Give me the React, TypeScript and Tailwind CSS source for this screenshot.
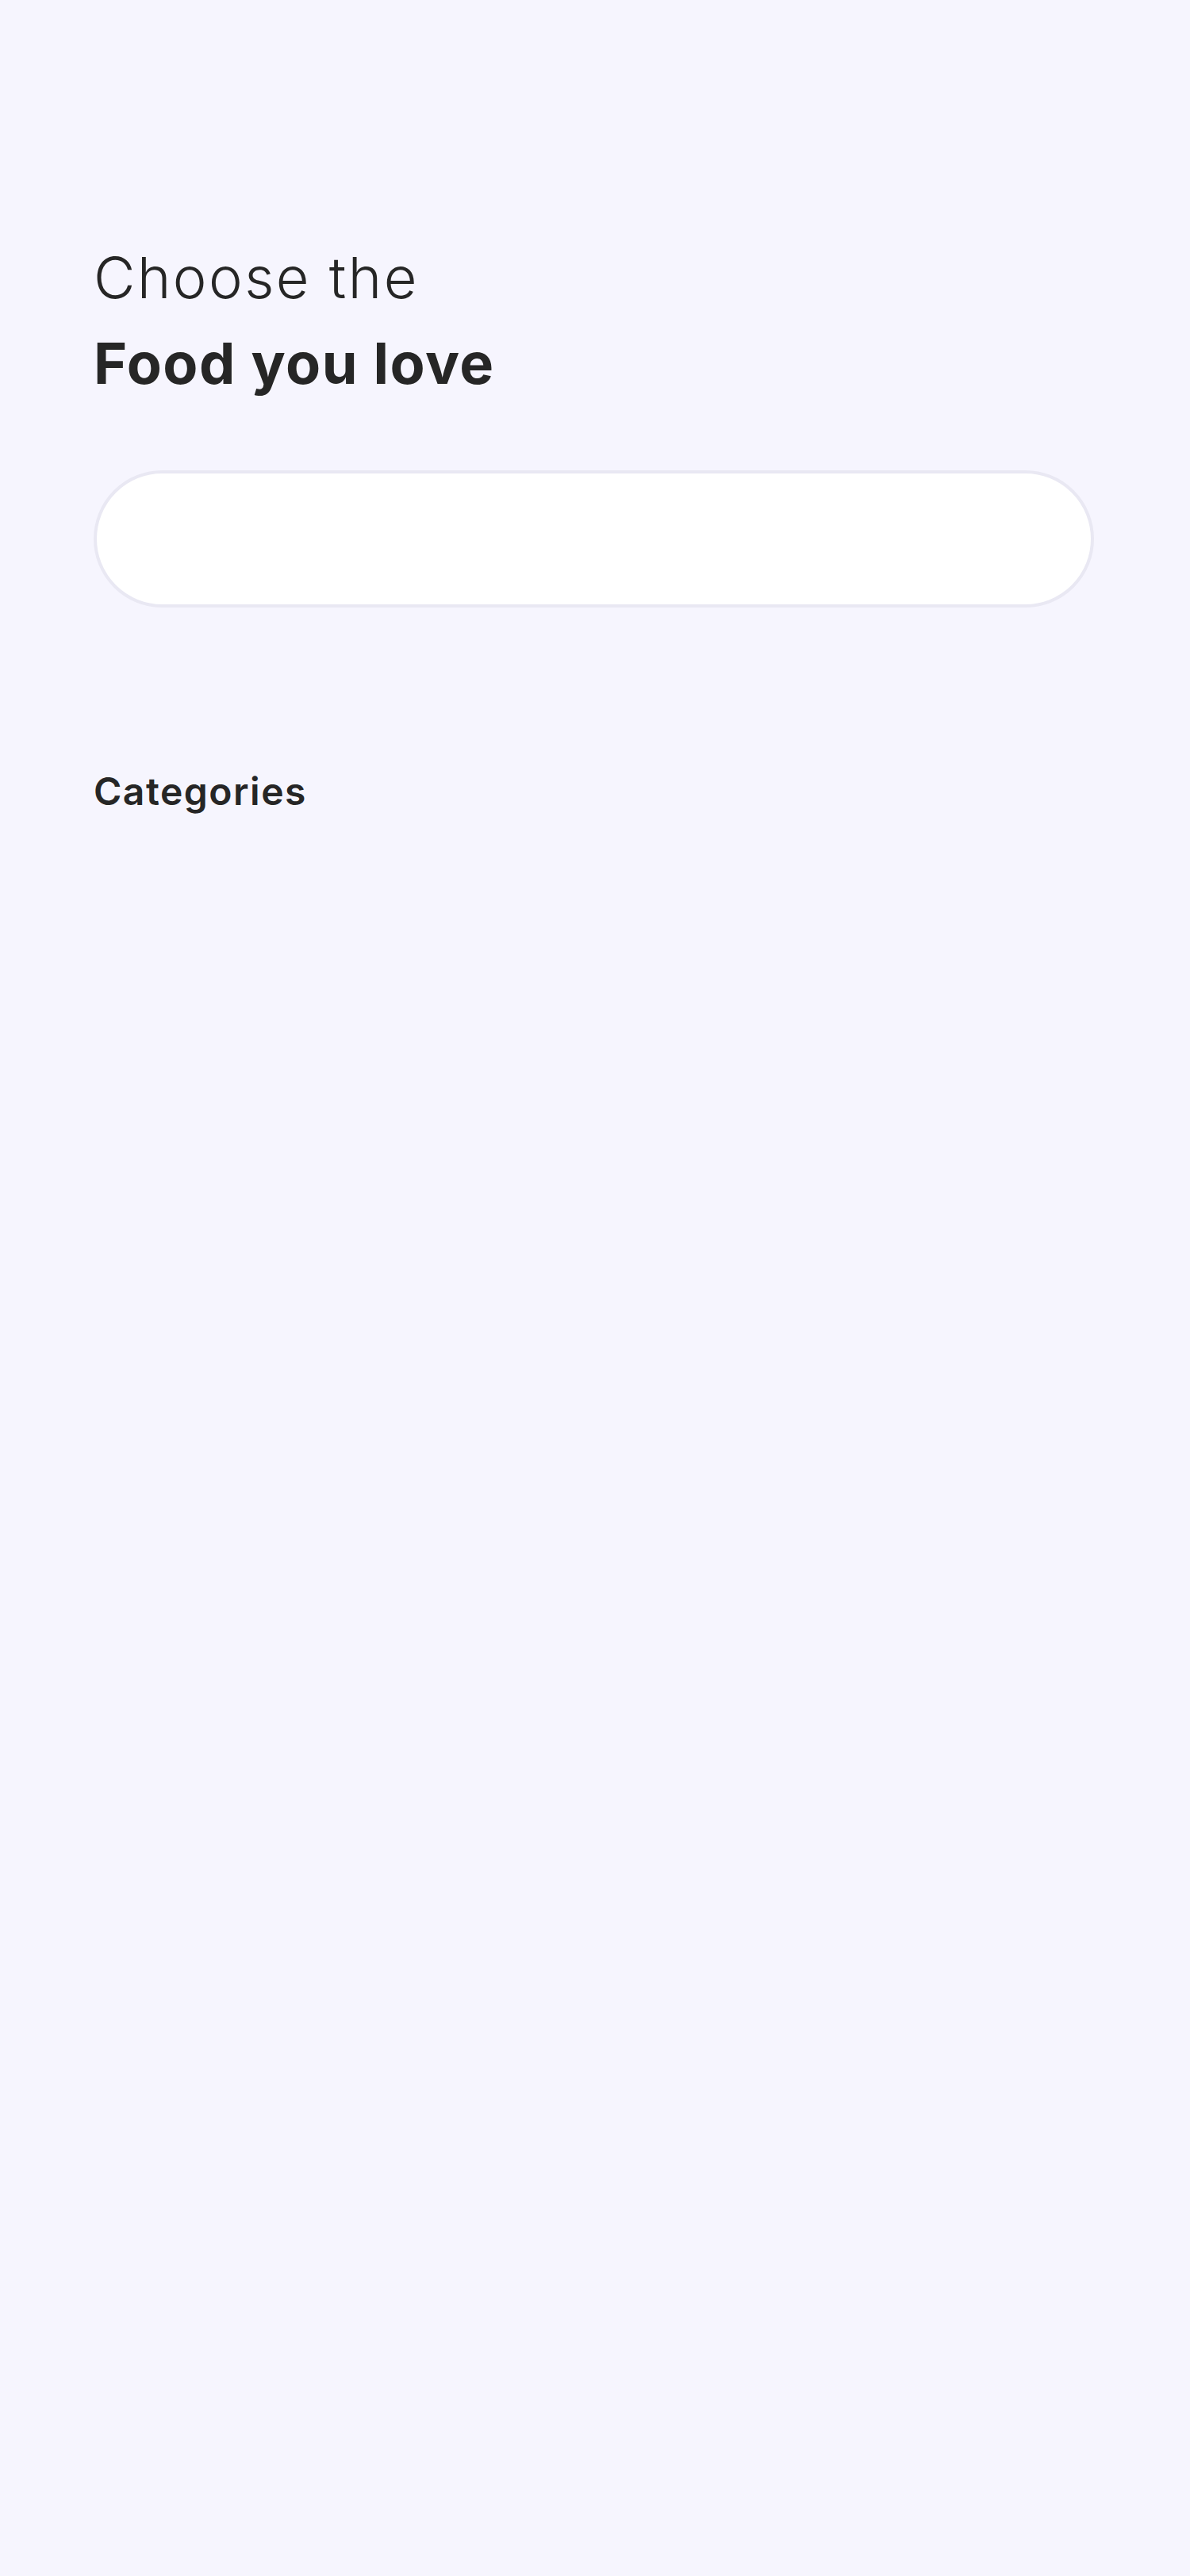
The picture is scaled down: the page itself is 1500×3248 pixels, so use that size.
export default function App() {
  return (
    <div className="min-h-[3248px] w-full bg-[#f6f5fe] text-[#262626] font-['Inter','Liberation_Sans',sans-serif]">
      <div className="pl-[118px] pr-[121px] pt-[296px]">
        <h1 className="text-[72px] leading-[108px] font-light tracking-[2.5px]">Choose the</h1>
        <h2 className="text-[72px] leading-[108px] font-bold tracking-[1.5px]">Food you love</h2>

        <div className="mt-[81px]">
          <input
            type="text"
            className="w-full h-[173px] rounded-full border-4 border-[#e9e8f3] bg-white px-16 outline-none"
          />
        </div>

        <h3 className="mt-[196px] text-[48px] leading-[72px] font-semibold tracking-[1.5px]">Categories</h3>
      </div>
    </div>
  );
}
